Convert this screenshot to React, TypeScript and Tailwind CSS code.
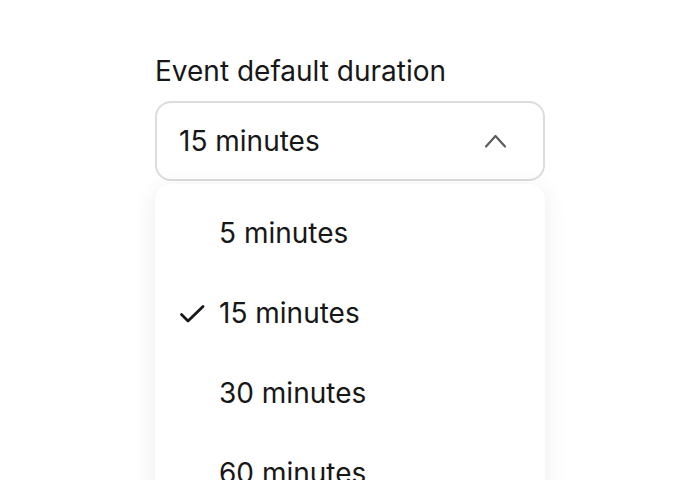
import React from 'react';

const options = ['5 minutes', '15 minutes', '30 minutes', '60 minutes'];

const CheckIcon = () => (
  <svg width="28" height="28" viewBox="0 0 28 28" fill="none" stroke="currentColor" strokeWidth="2.8" strokeLinecap="round" strokeLinejoin="round">
    <path d="M3.5 15.5l6.5 6.5L25 7.5" />
  </svg>
);

const ChevronUp = () => (
  <svg width="24" height="24" viewBox="0 0 24 24" fill="none" stroke="currentColor" strokeWidth="2.2" strokeLinecap="round" strokeLinejoin="round">
    <path d="M3 17.5L12.5 7l9.5 10.5" />
  </svg>
);

export default function App() {
  const selected = '15 minutes';

  return (
    <div className="h-[480px] w-[700px] bg-white overflow-hidden font-['Inter',sans-serif] text-[#171717]">
      <div className="ml-[155px] w-[390px] pt-[52px]">
        <p className="text-[28px] leading-[38px] mb-[11px]">Event default duration</p>
        <div className="h-[80px] rounded-[16px] border-2 border-[#dcdcdc] flex items-center justify-between pl-[22px] pr-[36px]">
          <span className="text-[28px]">{selected}</span>
          <span className="text-[#5c5c5c]">
            <ChevronUp />
          </span>
        </div>
        <div className="mt-[3px] rounded-[16px] bg-white shadow-[0_4px_24px_rgba(0,0,0,0.08)] pt-[9px]">
          {options.map((o) => (
            <div key={o} className="h-[80px] flex items-center">
              <span className="w-[65px] flex justify-end pr-[14px]">
                {o === selected && <CheckIcon />}
              </span>
              <span className="text-[28px] -ml-[1px]">{o}</span>
            </div>
          ))}
        </div>
      </div>
    </div>
  );
}
